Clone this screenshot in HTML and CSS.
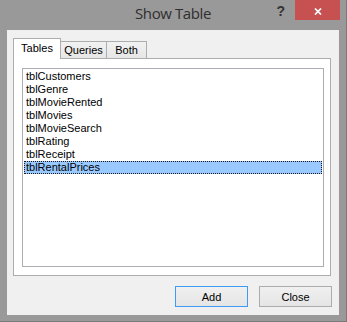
FILE: index.html
```html
<!DOCTYPE html>
<html lang="en">
<head>
    <meta charset="UTF-8">
    <title>Show Table</title>
    <link rel="stylesheet" href="styles.css">
</head>
<body>
    <div class="window">
        <div class="titlebar">
            <span></span>
            <div class="title">Show Table</div>
            <div class="controls">
                <span class="help">?</span>
                <button class="close-x" aria-label="Close">
                    <svg width="8" height="7" viewBox="0 0 8 7">
                        <path d="M1 0.5 L7 6.5 M7 0.5 L1 6.5" stroke="#fff" stroke-width="1.7" fill="none"/>
                    </svg>
                </button>
            </div>
        </div>

        <div class="client">
            <div class="tabs">
                <div class="tab active">Tables</div>
                <div class="tab">Queries</div>
                <div class="tab both">Both</div>
            </div>
            <div class="panel">
                <ul class="listbox">
                    <li>tblCustomers</li>
                    <li>tblGenre</li>
                    <li>tblMovieRented</li>
                    <li>tblMovies</li>
                    <li>tblMovieSearch</li>
                    <li>tblRating</li>
                    <li>tblReceipt</li>
                    <li class="selected">tblRentalPrices</li>
                </ul>
            </div>
            <div class="button-group">
                <button class="btn btn-default">Add</button>
                <button class="btn">Close</button>
            </div>
        </div>
    </div>
</body>
</html>
```

FILE: styles.css
```css
body {
    margin: 0;
    font-family: "Liberation Sans", Arial, sans-serif;
    font-size: 11px;
}
.window {
    width: 347px;
    height: 322px;
    box-sizing: border-box;
    background-color: #999999;
    padding: 0 7px 6px 7px;
    border-right: 1px solid #7b7b7b;
    border-bottom: 1px solid #7b7b7b;
}
.titlebar {
    height: 30px;
    display: grid;
    grid-template-columns: 1fr auto 1fr;
}
.title {
    font-family: "Open Sans", sans-serif;
    font-size: 15px;
    letter-spacing: -0.4px;
    color: #2f2f2f;
    line-height: 20px;
    padding-top: 3px;
}
.controls {
    display: flex;
    justify-content: flex-end;
    align-items: flex-start;
    margin-right: -1px;
}
.help {
    font-family: "Liberation Sans", Arial, sans-serif;
    font-weight: bold;
    font-size: 14px;
    line-height: 16px;
    color: #333;
    margin-top: 3px;
    margin-right: 10px;
}
.close-x {
    width: 45px;
    height: 20px;
    border: none;
    padding: 3px 0 0 0;
    background-color: #c75050;
    display: flex;
    justify-content: center;
    align-items: center;
}
.client {
    height: 285px;
    box-sizing: border-box;
    background-color: #f0f0f0;
    padding: 8px 8px 0 6px;
}
.tabs {
    display: flex;
    align-items: flex-end;
    height: 21px;
    margin-bottom: -1px;
}
.tab {
    box-sizing: border-box;
    width: 46px;
    height: 18px;
    border: 1px solid #adadad;
    border-left: none;
    background: linear-gradient(#f2f2f2, #e6e6e6);
    text-align: center;
    line-height: 13px;
    padding-top: 2px;
    color: #000;
}
.tab.both {
    width: 40px;
}
.tab.active {
    position: relative;
    z-index: 1;
    width: 48px;
    height: 21px;
    border-left: 1px solid #adadad;
    border-bottom: none;
    background: #fff;
    padding-top: 3px;
}
.panel {
    height: 218px;
    box-sizing: border-box;
    border: 1px solid #adadad;
    background-color: #fff;
    padding: 9px 6px 8px 8px;
}
.listbox {
    list-style: none;
    margin: 0;
    height: 199px;
    box-sizing: border-box;
    border: 1px solid #abadb3;
    padding: 1px;
}
.listbox li {
    height: 13px;
    line-height: 13px;
    padding-left: 2px;
    color: #000;
    box-sizing: border-box;
}
.listbox li.selected {
    background-color: #99c9ff;
    border: 1px dotted #1a1a1a;
    padding-left: 1px;
    line-height: 11px;
}
.button-group {
    display: flex;
    justify-content: flex-end;
    gap: 11px;
    margin-top: 10px;
    margin-right: -1px;
}
.btn {
    width: 73px;
    height: 21px;
    border: 1px solid #acacac;
    background: linear-gradient(#f0f0f0, #e5e5e5);
    font-family: "Liberation Sans", Arial, sans-serif;
    font-size: 11px;
    color: #000;
    padding: 0;
}
.btn-default {
    border-color: #3c9cf5;
}
```
